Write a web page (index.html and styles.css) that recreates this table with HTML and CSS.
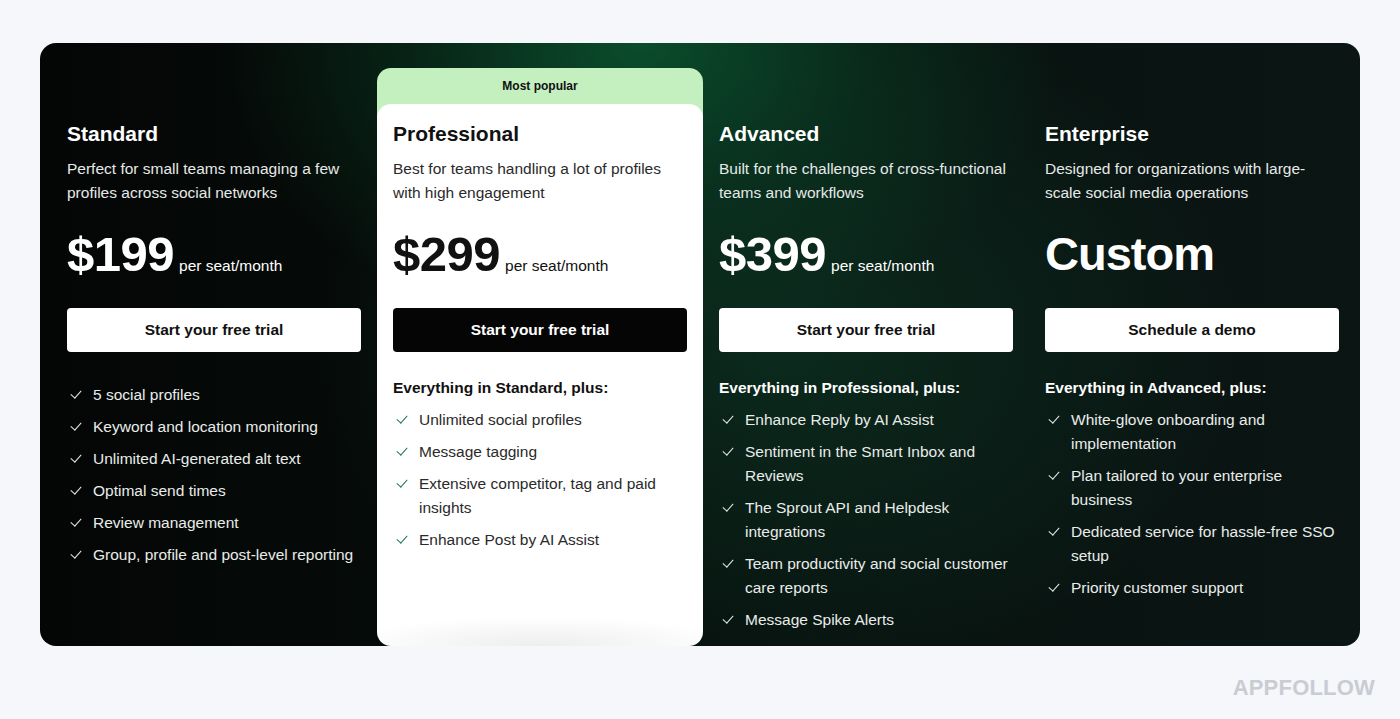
FILE: index.html
```html
<!DOCTYPE html>
<html lang="en">
<head>
<meta charset="utf-8">
<title>Pricing</title>
<link rel="stylesheet" href="styles.css">
</head>
<body>
<main class="page">
  <section class="panel">
    <div class="plan">
      <h2 class="plan-name">Standard</h2>
      <p class="plan-desc">Perfect for small teams managing a few profiles across social networks</p>
      <div class="price"><span class="amount">$199</span><span class="unit">per seat/month</span></div>
      <a class="btn btn-light">Start your free trial</a>
      <ul class="features first">
        <li>5 social profiles</li>
        <li>Keyword and location monitoring</li>
        <li>Unlimited AI-generated alt text</li>
        <li>Optimal send times</li>
        <li>Review management</li>
        <li>Group, profile and post-level reporting</li>
      </ul>
    </div>
    <div class="plan plan-popular">
      <div class="badge">Most popular</div>
      <div class="card">
        <h2 class="plan-name">Professional</h2>
        <p class="plan-desc">Best for teams handling a lot of profiles with high engagement</p>
        <div class="price"><span class="amount">$299</span><span class="unit">per seat/month</span></div>
        <a class="btn btn-dark">Start your free trial</a>
        <h3 class="features-title">Everything in Standard, plus:</h3>
        <ul class="features">
          <li>Unlimited social profiles</li>
          <li>Message tagging</li>
          <li>Extensive competitor, tag and paid insights</li>
          <li>Enhance Post by AI Assist</li>
        </ul>
      </div>
    </div>
    <div class="plan">
      <h2 class="plan-name">Advanced</h2>
      <p class="plan-desc">Built for the challenges of cross-functional teams and workflows</p>
      <div class="price"><span class="amount">$399</span><span class="unit">per seat/month</span></div>
      <a class="btn btn-light">Start your free trial</a>
      <h3 class="features-title">Everything in Professional, plus:</h3>
      <ul class="features">
        <li>Enhance Reply by AI Assist</li>
        <li>Sentiment in the Smart Inbox and Reviews</li>
        <li>The Sprout API and Helpdesk integrations</li>
        <li>Team productivity and social customer care reports</li>
        <li>Message Spike Alerts</li>
      </ul>
    </div>
    <div class="plan">
      <h2 class="plan-name">Enterprise</h2>
      <p class="plan-desc">Designed for organizations with large-scale social media operations</p>
      <div class="price"><span class="amount">Custom</span></div>
      <a class="btn btn-light">Schedule a demo</a>
      <h3 class="features-title">Everything in Advanced, plus:</h3>
      <ul class="features">
        <li>White-glove onboarding and implementation</li>
        <li>Plan tailored to your enterprise business</li>
        <li>Dedicated service for hassle-free SSO setup</li>
        <li>Priority customer support</li>
      </ul>
    </div>
  </section>
  <div class="watermark">APPFOLLOW</div>
</main>
</body>
</html>
```

FILE: styles.css
```css
* { box-sizing: border-box; }
html, body { margin: 0; padding: 0; }
body {
  background: #f5f7fb;
  font-family: "Liberation Sans", Arial, sans-serif;
  width: 1400px;
  height: 719px;
  overflow: hidden;
}
.page {
  padding: 43px 40px 0 40px;
  position: relative;
  height: 719px;
}
.panel {
  height: 603px;
  border-radius: 16px;
  display: grid;
  grid-template-columns: repeat(4, 326px);
  padding: 0 5px 0 11px;
  color: #fff;
  overflow: hidden;
  background:
    radial-gradient(ellipse 420px 300px at 600px 0px, rgba(10, 80, 45, 0.95), rgba(10, 70, 40, 0.4) 55%, rgba(0,0,0,0) 100%),
    radial-gradient(ellipse 460px 360px at 740px 300px, rgba(14, 60, 40, 0.6), rgba(0,0,0,0) 100%),
    linear-gradient(90deg, #040605 0%, #07100d 50%, #0b1614 100%);
}
.plan {
  padding: 78px 16px 0 16px;
  display: flex;
  flex-direction: column;
}
.plan-name {
  margin: 0;
  font-size: 21px;
  line-height: 26px;
  font-weight: 700;
}
.plan-desc {
  margin: 10px 0 0 0;
  font-size: 15.5px;
  line-height: 24px;
  color: #e6e9e8;
  height: 48px;
}
.price {
  margin-top: 17px;
  display: flex;
  align-items: baseline;
  height: 64px;
}
.amount {
  font-size: 49px;
  font-weight: 700;
  letter-spacing: -0.5px;
  line-height: 64px;
}
.plan:last-child .amount { letter-spacing: -1px; font-size: 47px; }
.unit {
  font-size: 15.5px;
  margin-left: 5px;
}
.btn {
  margin-top: 22px;
  height: 44px;
  border-radius: 4px;
  display: flex;
  align-items: center;
  justify-content: center;
  font-size: 15.5px;
  font-weight: 700;
}
.btn-light { background: #fff; color: #111; }
.btn-dark { background: #050505; color: #fff; }
.features-title {
  margin: 24px 0 0 0;
  font-size: 15.5px;
  line-height: 24px;
  font-weight: 700;
}
.features {
  list-style: none;
  margin: 8px 0 0 0;
  padding: 0;
  display: flex;
  flex-direction: column;
  gap: 8px;
}
.features.first { margin-top: 31px; }
.features li {
  position: relative;
  padding-left: 26px;
  font-size: 15.5px;
  line-height: 24px;
  color: #e9ecea;
}
.features li::before {
  content: "";
  position: absolute;
  left: 4px;
  top: 7px;
  width: 9px;
  height: 5px;
  border-left: 1.5px solid currentColor;
  border-bottom: 1.5px solid currentColor;
  transform: rotate(-48deg);
}
.plan-popular {
  padding: 25px 0 0 0;
}
.badge {
  background: #c4f0c0;
  color: #111;
  border-radius: 14px 14px 0 0;
  height: 52px;
  font-size: 12px;
  font-weight: 700;
  text-align: center;
  padding-top: 11px;
}
.card {
  margin-top: -16px;
  flex: 1;
  background:
    radial-gradient(ellipse 200px 30px at 50% 100%, rgba(0,0,0,0.07), rgba(0,0,0,0) 100%),
    #fff;
  color: #111;
  border-radius: 14px;
  padding: 17px 16px 0 16px;
}
.card .plan-desc { color: #2a2a2a; }
.card .features li { color: #2a2a2a; }
.card .features li::before { color: #1e7a55; }
.watermark {
  position: absolute;
  right: 25px;
  top: 675px;
  font-size: 22px;
  font-weight: 700;
  letter-spacing: 0.2px;
  color: #c9ccd1;
}
```
